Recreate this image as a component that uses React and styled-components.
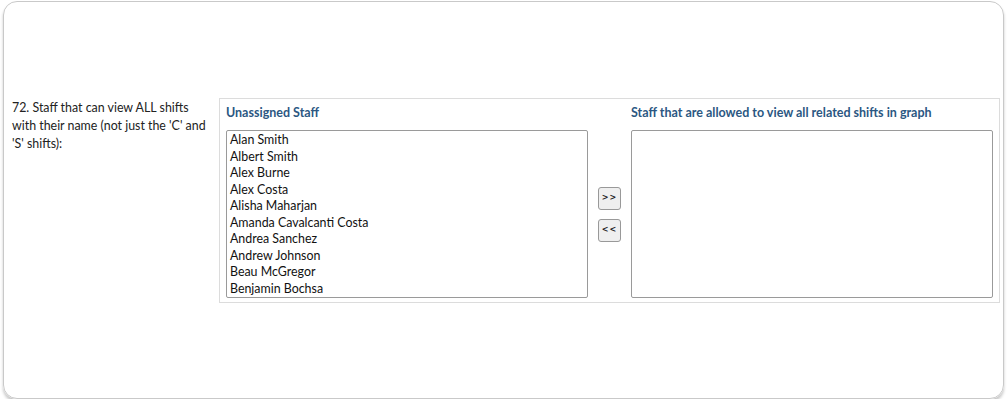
import React from 'react';
import styled, { createGlobalStyle } from 'styled-components';

const staff = [
  'Alan Smith',
  'Albert Smith',
  'Alex Burne',
  'Alex Costa',
  'Alisha Maharjan',
  'Amanda Cavalcanti Costa',
  'Andrea Sanchez',
  'Andrew Johnson',
  'Beau McGregor',
  'Benjamin Bochsa',
];

const GlobalStyle = createGlobalStyle`
  html, body {
    margin: 0;
    padding: 0;
    background: #ffffff;
  }
  body {
    font-family: Lato, "Open Sans", sans-serif;
    color: #222;
  }
`;

const Card = styled.div`
  box-sizing: border-box;
  margin: 1px 4px 0 3px;
  height: 398px;
  border: 1px solid #c9c9c9;
  border-radius: 14px;
  box-shadow: 0 3px 3px rgba(0, 0, 0, 0.22);
  padding: 96px 0 0 8px;
`;

const Row = styled.div`
  display: flex;
  align-items: flex-start;
`;

const Label = styled.div`
  box-sizing: border-box;
  width: 207px;
  flex: none;
  padding: 1px 6px 0 0;
  font-size: 12.4px;
  line-height: 18px;
  color: #222;
`;

const Group = styled.div`
  flex: none;
  border: 1px solid #dcdcdc;
  padding: 7px 6px 4px 6px;
  display: grid;
  grid-template-columns: 362px 43px 362px;
  grid-template-rows: auto auto;
`;

const Heading = styled.div`
  font-size: 12.5px;
  font-weight: 700;
  line-height: 14px;
  color: #2b5782;
  margin-bottom: 10px;
  white-space: nowrap;
  grid-column: ${(p) => p.$col};
`;

const ListBox = styled.div`
  box-sizing: border-box;
  height: 168px;
  border: 1px solid #9a9a9a;
  border-radius: 2px;
  padding: 1px 0 0 3px;
  overflow: hidden;
  background: #fff;
`;

const Item = styled.div`
  font-size: 12.4px;
  line-height: 16.5px;
  color: #111;
  white-space: nowrap;
`;

const Buttons = styled.div`
  display: flex;
  flex-direction: column;
  align-items: center;
  justify-content: center;
  gap: 9px;
`;

const MoveButton = styled.button`
  box-sizing: border-box;
  width: 23px;
  height: 23px;
  padding: 0 0 1px 0;
  border: 1px solid #999;
  border-radius: 3px;
  background: #efefef;
  font-family: "DejaVu Sans", sans-serif;
  font-size: 8px;
  font-weight: 700;
  letter-spacing: 1px;
  color: #222;
  cursor: pointer;
`;

export default function App() {
  return (
    <>
      <GlobalStyle />
      <Card>
        <Row>
          <Label>
            72. Staff that can view ALL shifts with their name (not just the 'C' and 'S' shifts):
          </Label>
          <Group>
            <Heading $col={1}>Unassigned Staff</Heading>
            <Heading $col={3}>Staff that are allowed to view all related shifts in graph</Heading>
            <ListBox>
              {staff.map((name) => (
                <Item key={name}>{name}</Item>
              ))}
            </ListBox>
            <Buttons>
              <MoveButton>&gt;&gt;</MoveButton>
              <MoveButton>&lt;&lt;</MoveButton>
            </Buttons>
            <ListBox />
          </Group>
        </Row>
      </Card>
    </>
  );
}
